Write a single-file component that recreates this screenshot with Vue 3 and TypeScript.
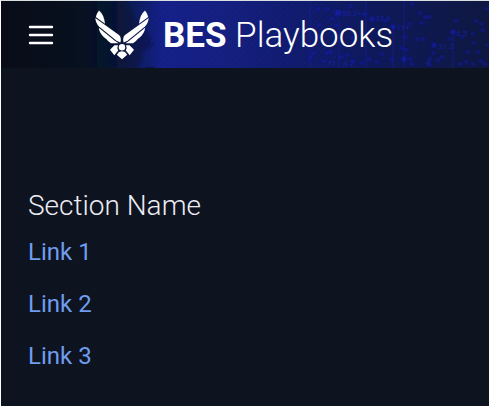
<script setup lang="ts">
import { ref } from 'vue'

interface PlaybookLink {
  label: string
  href: string
}

const menuOpen = ref<boolean>(false)
const links: PlaybookLink[] = [
  { label: 'Link 1', href: '#link-1' },
  { label: 'Link 2', href: '#link-2' },
  { label: 'Link 3', href: '#link-3' },
]

const dots: [number, number][] = [
  [317, 9], [326, 9], [337, 12], [350, 6], [411, 4], [421, 23], [428, 17], [424, 17], [419, 13],
  [455, 21], [475, 21], [480, 24], [486, 9], [482, 30], [487, 45], [318, 25], [331, 19], [335, 25],
  [352, 38], [318, 37], [348, 28], [409, 24], [400, 48], [403, 60], [416, 39], [404, 37], [429, 59],
  [428, 65], [422, 39], [437, 60], [432, 53], [441, 57], [448, 39], [461, 37], [472, 34], [473, 43],
  [467, 52], [477, 52], [459, 64], [465, 62], [472, 64], [480, 61], [484, 64], [309, 58], [313, 53],
  [326, 53], [330, 52], [340, 57], [346, 55], [352, 61], [376, 62], [381, 54], [391, 59], [368, 59],
  [361, 63], [323, 61], [384, 21], [363, 15], [405, 50], [409, 59], [411, 64], [427, 63],
]
const labels = [
  { x: 341, y: 15, text: '50.2++' },
  { x: 374, y: 20, text: '33.6' },
  { x: 395, y: 29, text: '11+' },
  { x: 455, y: 35, text: '6.5' },
  { x: 437, y: 48, text: '31.2' },
  { x: 326, y: 65, text: '71' },
  { x: 342, y: 65, text: '4.2' },
]
</script>

<template>
  <div class="page">
    <header class="banner">
      <svg class="art" viewBox="0 0 488 67" preserveAspectRatio="xMidYMid slice" aria-hidden="true">
        <defs>
          <linearGradient id="base" x1="0" x2="1" y1="0" y2="0">
            <stop offset="0" stop-color="#090c18" />
            <stop offset="0.15" stop-color="#07101e" />
            <stop offset="0.22" stop-color="#08152b" />
            <stop offset="0.27" stop-color="#0c1c56" />
            <stop offset="0.33" stop-color="#141f88" />
            <stop offset="0.45" stop-color="#151f80" />
            <stop offset="0.6" stop-color="#101b6e" />
            <stop offset="0.78" stop-color="#0e1959" />
            <stop offset="1" stop-color="#0f1840" />
          </linearGradient>
          <linearGradient id="fade" x1="0" x2="1" y1="0" y2="0">
            <stop offset="0" stop-color="#071126" stop-opacity="0" />
            <stop offset="0.5" stop-color="#081437" stop-opacity="0.9" />
            <stop offset="1" stop-color="#0f1a5e" />
          </linearGradient>
          <pattern id="hatch" width="6" height="6" patternUnits="userSpaceOnUse">
            <path d="M-1 7 7 -1" stroke="#2533a5" stroke-width="1" opacity="0.12" />
          </pattern>
          <filter id="soft"><feGaussianBlur stdDeviation="0.8" /></filter>
        </defs>
        <rect width="488" height="67" fill="url(#base)" />
        <path d="M85 0h38c8 5 7 15 13 20 5 5 11 12 15 20 2 5-2 8-7 9-4 3-1 7-3 10-1 2-4 4-3 8H85z" fill="url(#fade)" filter="url(#soft)" />
        <path d="M144 67c2-2 7-2 11 0z" fill="#0c1650" />
        <rect x="150" width="190" height="67" fill="url(#hatch)" />
        <path d="M309 0v67M338 20v47M365 0v67M392 25v42M403 0v67M452 30v37" stroke="#1520b0" stroke-width="2" opacity="0.26" />
        <g fill="#141eba" opacity="0.75" filter="url(#soft)">
          <circle v-for="(dot, i) in dots" :key="i" :cx="dot[0]" :cy="dot[1] - 1" r="1.7" />
          <circle cx="337" cy="12" r="3" />
          <circle cx="371" cy="18" r="2.5" />
          <circle cx="392" cy="26" r="2.5" />
          <circle cx="452" cy="31" r="2.5" />
          <circle cx="433" cy="44" r="2.5" />
          <circle cx="403" cy="58" r="2.5" />
        </g>
        <g fill="#1822b4" opacity="0.8">
          <text v-for="label in labels" :key="label.text" class="reading" :x="label.x" :y="label.y">{{ label.text }}</text>
        </g>
      </svg>
      <button class="menu" type="button" aria-label="Menu" :aria-expanded="menuOpen" @click="menuOpen = !menuOpen">
        <svg viewBox="0 0 26 22" width="26" height="22">
          <path d="M2 3h22M2 11h22M2 19h22" stroke="#fff" stroke-width="2.4" stroke-linecap="round" />
        </svg>
      </button>
      <svg class="emblem" viewBox="0 0 54 50" width="54" height="50" aria-hidden="true">
        <g id="half" fill="#fff">
          <path d="M4 .5C7.500 3.500 9.500 8 10 13.800L.8 7C1.400 4.500 2.600 2.300 4 .5z" />
          <path d="M.3 8 24 25C26 26.500 26.300 30 25.300 32.600L21.500 30.800 4 16.500C1.900 14.400.6 11.500.3 8z" />
          <path d="M3.800 17.800 19.500 30.500 23.500 33.200H16L13 31C11.700 28.800 9 27.800 7.300 25.500 5.500 23.500 4.200 21 3.800 17.800z" />
          <path d="M15 39.700 19.500 35.200H23L22.300 38 23.200 40.500 19.300 45.300z" />
        </g>
        <use href="#half" transform="matrix(-1 0 0 1 54 0)" />
        <circle cx="27" cy="37.200" r="3.200" fill="#fff" />
        <path d="M24 42 27 41.200 30 42 32.200 44.800 27 49.300 21.800 44.800z" fill="#fff" />
      </svg>
      <h1 class="brand"><strong>BES</strong> Playbooks</h1>
    </header>
    <main class="content">
      <nav aria-labelledby="section-title">
        <h2 id="section-title">Section Name</h2>
        <ul>
          <li v-for="link in links" :key="link.href"><a :href="link.href">{{ link.label }}</a></li>
        </ul>
      </nav>
    </main>
  </div>
</template>

<style>
body {
  background: #fff;
}
</style>

<style scoped>
.page {
  box-sizing: border-box;
  min-height: 100vh;
  border: 1px solid #fff;
  border-top-color: #d9dfe0;
  border-bottom-width: 2px;
  background: #0d141f;
  background-clip: padding-box;
  font-family: Roboto, sans-serif;
}
.banner {
  position: relative;
  display: flex;
  align-items: center;
  height: 67px;
  padding-left: 27px;
  color: #fff;
}
.art {
  position: absolute;
  inset: 0;
  width: 100%;
  height: 100%;
}
.reading {
  font-size: 8px;
}
.menu,
.emblem,
.brand {
  position: relative;
}
.menu {
  display: flex;
  padding: 0;
  border: 0;
  background: none;
  cursor: pointer;
}
.emblem {
  margin-left: 41px;
}
.brand {
  margin: 0 0 0 14px;
  padding-top: 2px;
  font-size: 35px;
  font-weight: 300;
  line-height: 42px;
  white-space: nowrap;
}
.brand strong {
  font-weight: 700;
}
.content {
  padding: 120px 27px 24px;
}
h2 {
  margin: 0;
  color: #ececf4;
  font-size: 28px;
  font-weight: 300;
  line-height: 36px;
}
ul {
  display: grid;
  gap: 20px;
  margin: 12px 0 0;
  padding: 0;
  font-size: 24px;
  line-height: 32px;
  list-style: none;
}
a {
  color: #6f9cf0;
  text-decoration: none;
}
</style>
